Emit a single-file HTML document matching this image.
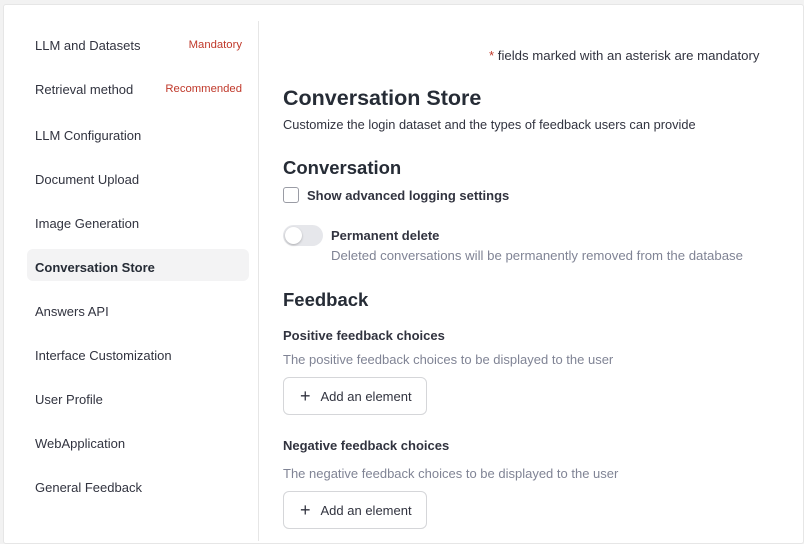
<!DOCTYPE html>
<html><head><meta charset="utf-8"><style>
*{box-sizing:border-box;margin:0;padding:0}
body{width:804px;height:536px;background:#f2f2f2;font-family:"Liberation Sans",sans-serif;color:#31333f;overflow:hidden;position:relative}
.panel{position:absolute;left:3px;top:4px;width:801px;height:540px;background:#fff;border:1px solid #e6e6e6;border-radius:3px}
.div{position:absolute;left:258px;top:21px;width:1px;height:520px;background:#e6e6e6}
.nav{position:absolute;left:35px;font-size:13px;color:#31333f}
.tag{position:absolute;font-size:11.3px;color:#c0392b;right:562px}
.sel{position:absolute;left:27px;top:249px;width:222px;height:32px;background:#f3f3f4;border-radius:6px}
.t{position:absolute;left:283px;white-space:nowrap}
.h1{font-size:21.5px;font-weight:bold;color:#262c36}
.h2{font-size:18.5px;font-weight:bold;color:#262c36}
.p{font-size:12.8px;color:#31333f}
.g{font-size:13px;color:#808495}
.b{font-size:13px;font-weight:bold}
.btn{position:absolute;left:283px;width:144px;height:38px;border:1px solid #d5d6d9;border-radius:6px;font-size:13px;display:flex;align-items:center;padding-left:16px}
.btn span{font-size:18px;margin-right:10px;font-weight:300}
</style></head><body>
<div class="panel"></div>
<div class="div"></div>
<div class="sel"></div>
<div class="nav" style="top:38px">LLM and Datasets</div>
<div class="tag" style="top:39px">Mandatory</div>
<div class="nav" style="top:82px">Retrieval method</div>
<div class="tag" style="top:83px">Recommended</div>
<div class="nav" style="top:128px">LLM Configuration</div>
<div class="nav" style="top:172px">Document Upload</div>
<div class="nav" style="top:216px">Image Generation</div>
<div class="nav" style="top:260px;font-weight:bold;color:#262c36">Conversation Store</div>
<div class="nav" style="top:304px">Answers API</div>
<div class="nav" style="top:348px">Interface Customization</div>
<div class="nav" style="top:392px">User Profile</div>
<div class="nav" style="top:436px">WebApplication</div>
<div class="nav" style="top:480px">General Feedback</div>

<div class="t" style="left:489px;top:48px;font-size:13.2px"><span style="color:#c0392b">*</span> fields marked with an asterisk are mandatory</div>
<div class="t h1" style="top:86px">Conversation Store</div>
<div class="t p" style="top:117px">Customize the login dataset and the types of feedback users can provide</div>
<div class="t h2" style="top:157px">Conversation</div>
<div style="position:absolute;left:283px;top:187px;width:16px;height:16px;border:1px solid #9a9ca5;border-radius:3px"></div>
<div class="t b" style="left:307px;top:188px">Show advanced logging settings</div>
<div style="position:absolute;left:283px;top:225px;width:40px;height:21px;background:#e6e7eb;border-radius:11px"></div>
<div style="position:absolute;left:285px;top:227px;width:17px;height:17px;background:#fff;border-radius:50%;box-shadow:0 1px 2px rgba(0,0,0,.25)"></div>
<div class="t b" style="left:331px;top:228px">Permanent delete</div>
<div class="t g" style="left:331px;top:248px;font-size:13.2px">Deleted conversations will be permanently removed from the database</div>
<div class="t h2" style="top:289px">Feedback</div>
<div class="t b" style="top:328px">Positive feedback choices</div>
<div class="t g" style="top:352px">The positive feedback choices to be displayed to the user</div>
<div class="btn" style="top:377px"><span>+</span>Add an element</div>
<div class="t b" style="top:438px">Negative feedback choices</div>
<div class="t g" style="top:466px">The negative feedback choices to be displayed to the user</div>
<div class="btn" style="top:491px"><span>+</span>Add an element</div>
</body></html>
